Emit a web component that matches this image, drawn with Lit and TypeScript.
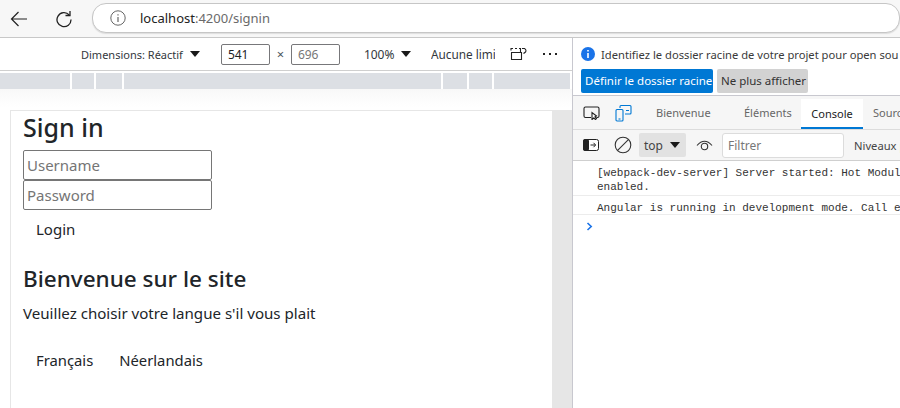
import { LitElement, html, css } from "lit";
import { customElement } from "lit/decorators.js";

@customElement("app-root")
export class AppRoot extends LitElement {
  static styles = css`
    :host { display: block; width: 900px; height: 408px; overflow: hidden; background: #fff; font-family: "Noto Sans", "Open Sans", sans-serif; color: #1f1f1f; }
    svg { display: block; flex: none; }
    .nav { height: 37px; background: #f7f7f7; border-bottom: 1px solid #c8c8c8; display: flex; align-items: center; padding-left: 10px; box-sizing: content-box; }
    .nav .back { margin-right: 27px; }
    .nav .reload { margin-right: 19px; }
    .url { width: 900px; height: 28px; margin-top: -1px; border-radius: 14px; background: #fff; border: 1px solid #c6c6c6; box-shadow: 0 1px 1px #ddd; display: flex; align-items: center; padding-left: 17px; font-size: 13px; color: #6a6a6a; }
    .url svg { margin-right: 14px; }
    .url b { font-weight: 400; color: #222; }
    .main { display: flex; height: 370px; }
    .left { width: 572px; flex: none; border-right: 1px solid #c8c8cf; display: flex; flex-direction: column; }
    .device { height: 32px; border-bottom: 1px solid #cfcfcf; display: flex; align-items: center; font-size: 11px; color: #33383d; padding-left: 81px; white-space: nowrap; }
    .tri { width: 0; height: 0; border-left: 5px solid transparent; border-right: 5px solid transparent; border-top: 6px solid #1a1a1a; flex: none; }
    .tri-a { margin: 0 21px 0 7px; }
    .dim { width: 41px; height: 19px; box-sizing: content-box; border: 1px solid #77777a; border-radius: 2px; font-size: 12px; line-height: 19px; padding-left: 6px; color: #222; flex: none; }
    .dim.grey { color: #777; }
    .by { font-size: 13px; width: 21px; text-align: center; color: #4a5560; flex: none; }
    .zoom { font-size: 12px; margin-left: 24px; width: 37px; flex: none; }
    .clip { width: 64px; overflow: hidden; margin-left: 20px; flex: none; font-size: 11.8px; }
    .rot { margin-left: 15px; }
    .dots { display: flex; gap: 4px; margin-left: 15px; }
    .dots i { width: 2px; height: 2px; background: #222; }
    .ruler { display: flex; height: 16px; margin-top: 2px; gap: 2px; flex: none; }
    .ruler i { background: #dcdfe4; }
    .stage { flex: 1; display: flex; padding-top: 21px; padding-left: 11px; background: linear-gradient(#f8f8f8, #fff 18px); min-height: 0; }
    .card { width: 542px; flex: none; background: #fff; border-top: 1px solid #e6e6e6; border-left: 1px solid #e6e6e6; margin-left: -1px; padding-left: 12px; box-sizing: border-box; }
    .bar { width: 20px; background: #e6e6e6; flex: none; }
    h1 { margin: -1px 0 0; font-size: 25px; font-weight: 500; line-height: 34px; color: #212529; }
    .in { width: 189px; height: 30px; box-sizing: border-box; border: 1px solid #767676; border-radius: 2px; padding-left: 3px; font-size: 15px; line-height: 28px; color: #757575; }
    .first { margin-top: 6px; }
    .btn { padding-left: 13px; font-size: 15px; line-height: 20px; color: #212529; }
    .login { margin-top: 9px; }
    h2 { margin: 25px 0 0; font-size: 22.5px; font-weight: 500; line-height: 30px; color: #212529; }
    p { margin: 9px 0 0; font-size: 15.1px; line-height: 20px; color: #212529; }
    .langs { display: flex; gap: 26px; padding-left: 13px; margin-top: 27px; font-size: 14.8px; line-height: 20px; color: #212529; }
    .right { flex: 1; min-width: 0; display: flex; flex-direction: column; white-space: nowrap; overflow: hidden; }
    .info { height: 58px; flex: none; border-bottom: 1px solid #c8c8cf; padding: 7px 0 0 8px; box-sizing: border-box; font-size: 11.2px; color: #3a3a3a; }
    .infoline { display: flex; align-items: center; gap: 6px; height: 18px; }
    .actions { display: flex; gap: 4px; margin-top: 6px; }
    .primary { background: #0078d4; color: #fff; height: 24px; line-height: 24px; padding: 0 4px; width: 132px; box-sizing: border-box; border-radius: 2px; font-size: 11.5px; flex: none; }
    .second { background: #d2d2d2; color: #333; height: 24px; line-height: 24px; width: 91px; padding-left: 4px; box-sizing: border-box; border-radius: 2px; font-size: 11.5px; flex: none; }
    .tabs { height: 34px; flex: none; box-sizing: border-box; background: #f6f6f6; border-bottom: 1px solid #dcdcdc; display: flex; align-items: stretch; font-size: 11px; color: #666; padding-left: 10px; }
    .tabs svg { align-self: center; }
    .dev { margin-left: 15px; }
    .tab { display: flex; align-items: center; box-sizing: border-box; flex: none; }
    .t1 { margin-left: 24px; width: 54px; }
    .t2 { margin-left: 34px; width: 47px; }
    .tab.on { background: #fff; color: #222; border-bottom: 2px solid #0078d4; width: 62px; justify-content: center; margin: 3px 0 0 10px; }
    .t4 { margin-left: 10px; }
    .cons { height: 31px; flex: none; box-sizing: border-box; background: #f6f6f6; border-bottom: 1px solid #cfcfcf; display: flex; align-items: center; font-size: 12px; color: #444; padding-left: 10px; }
    .clear { margin-left: 15px; }
    .ctx { width: 47px; height: 24px; flex: none; background: #e2e2e2; margin-left: 7px; border-radius: 2px; display: flex; align-items: center; gap: 7px; padding-left: 5px; box-sizing: border-box; }
    .eye { margin-left: 10px; }
    .filter { width: 122px; height: 25px; flex: none; box-sizing: border-box; background: #fff; border: 1px solid #dcdcdc; border-radius: 3px; margin-left: 9px; padding-left: 5px; line-height: 23px; color: #777; }
    .lvl { margin-left: 10px; font-size: 11.2px; }
    .log { font-family: "Liberation Mono", monospace; font-size: 11px; line-height: 14px; color: #333; padding-left: 24px; border-bottom: 1px solid #ececec; padding-top: 5px; box-sizing: border-box; flex: none; }
    .log.a { height: 35px; }
    .log.b { height: 19px; }
    .prompt { padding: 7px 0 0 13px; }
  `;

  render() {
    const segs = [70, 22, 26, 317, 24, 23, 76];
    return html`
      <div class="nav">
        <svg class="back" width="18" height="18" viewBox="0 0 18 18" fill="none" stroke="#222" stroke-width="1.2"><path d="M1.5 9H17M8.5 2L1.5 9L8.5 16"/></svg>
        <svg class="reload" width="18" height="18" viewBox="0 0 18 18" fill="none" stroke="#222" stroke-width="1.3"><path d="M14.2 5A7 7 0 1 0 16 9.5"/><path d="M15 1V5.5H10.5"/></svg>
        <div class="url">
          <svg width="16" height="16" viewBox="0 0 16 16" fill="none" stroke="#666" stroke-width="1"><circle cx="8" cy="8" r="7.2"/><path d="M8 7V12M8 4.2V5.6" stroke-width="1.2"/></svg>
          <span><b>localhost</b>:4200/signin</span>
        </div>
      </div>
      <div class="main">
        <div class="left">
          <div class="device">
            <span>Dimensions: Réactif</span><span class="tri tri-a"></span>
            <span class="dim">541</span><span class="by">×</span><span class="dim grey">696</span>
            <span class="zoom">100%</span><span class="tri"></span>
            <span class="clip">Aucune limi</span>
            <svg class="rot" width="18" height="14" viewBox="0 0 18 14" fill="none" stroke="#222" stroke-width="1.1"><path d="M1 3.5V1.5H3M5 1.5H7M9 1.5H10.5V5.5M1 5.5H11.5V12.5H1.5V5.5"/><path d="M12 1.5H14.5C16.5 2.5 16.5 5 14.5 6M15.5 5L13.5 6.5"/></svg>
            <span class="dots"><i></i><i></i><i></i></span>
          </div>
          <div class="ruler">
            ${segs.map((w) => html`<i style="width:${w}px"></i>`)}
          </div>
          <div class="stage">
            <div class="card">
              <h1>Sign in</h1>
              <div class="in first">Username</div>
              <div class="in">Password</div>
              <div class="btn login">Login</div>
              <h2>Bienvenue sur le site</h2>
              <p>Veuillez choisir votre langue s'il vous plait</p>
              <div class="langs"><span>Français</span><span>Néerlandais</span></div>
            </div>
            <div class="bar"></div>
          </div>
        </div>
        <div class="right">
          <div class="info">
            <div class="infoline">
              <svg width="14" height="14" viewBox="0 0 14 14"><circle cx="7" cy="7" r="7" fill="#1a73e8"/><path d="M7 6V11M7 3V4.6" stroke="#fff" stroke-width="1.6"/></svg>
              <span>Identifiez le dossier racine de votre projet pour open sou</span>
            </div>
            <div class="actions"><span class="primary">Définir le dossier racine</span><span class="second">Ne plus afficher</span></div>
          </div>
          <div class="tabs">
            <svg width="17" height="14" viewBox="0 0 17 14" fill="none" stroke="#222" stroke-width="1.1"><path d="M8 11.5H2.5Q1 11.5 1 10V2.5Q1 1 2.5 1H14.5Q16 1 16 2.5V10Q16 11.5 14.5 11.5H13.5"/><path d="M9 6.5V13.5L10.8 12L12.5 13.5L13.5 12.5L12 10.8L13.5 10Z" fill="#fff"/></svg>
            <svg class="dev" width="17" height="18" viewBox="0 0 17 18" fill="none" stroke="#0078d4" stroke-width="1.1"><path d="M5 4V2.5Q5 1.5 6 1.5H15Q16 1.5 16 2.5V9Q16 10 15 10H10M11 6.5H14"/><rect x="1" y="5.5" width="7" height="11.5" rx="1"/><path d="M3.5 15H5.5"/></svg>
            <span class="tab t1">Bienvenue</span>
            <span class="tab t2">Éléments</span>
            <span class="tab on">Console</span>
            <span class="tab t4">Sourc</span>
          </div>
          <div class="cons">
            <svg width="16" height="12" viewBox="0 0 16 12"><rect x="0.5" y="0.5" width="15" height="11" rx="2" fill="#fff" stroke="#222"/><rect x="0" y="0" width="6" height="12" rx="2" fill="#222"/><path d="M7.5 6H12M10.5 3.8L12.7 6L10.5 8.2" stroke="#222" fill="none"/></svg>
            <svg class="clear" width="18" height="18" viewBox="0 0 18 18" fill="none" stroke="#333" stroke-width="1.1"><circle cx="9" cy="9" r="7.8"/><path d="M3.6 14.4L14.4 3.6"/></svg>
            <div class="ctx"><span>top</span><span class="tri"></span></div>
            <svg class="eye" width="17" height="12" viewBox="0 0 17 12" fill="none" stroke="#333" stroke-width="1.1"><path d="M1 6.5Q8.5 -2 16 6.5"/><circle cx="8.5" cy="7.5" r="3.2"/></svg>
            <div class="filter">Filtrer</div>
            <span class="lvl">Niveaux p</span>
          </div>
          <div class="log a">[webpack-dev-server] Server started: Hot Modul<br>enabled.</div>
          <div class="log b">Angular is running in development mode. Call e</div>
          <div class="prompt"><svg width="7" height="9" viewBox="0 0 7 9" fill="none" stroke="#1a73e8" stroke-width="1.6"><path d="M1.5 1L5.2 4.5L1.5 8"/></svg></div>
        </div>
      </div>
    `;
  }
}
